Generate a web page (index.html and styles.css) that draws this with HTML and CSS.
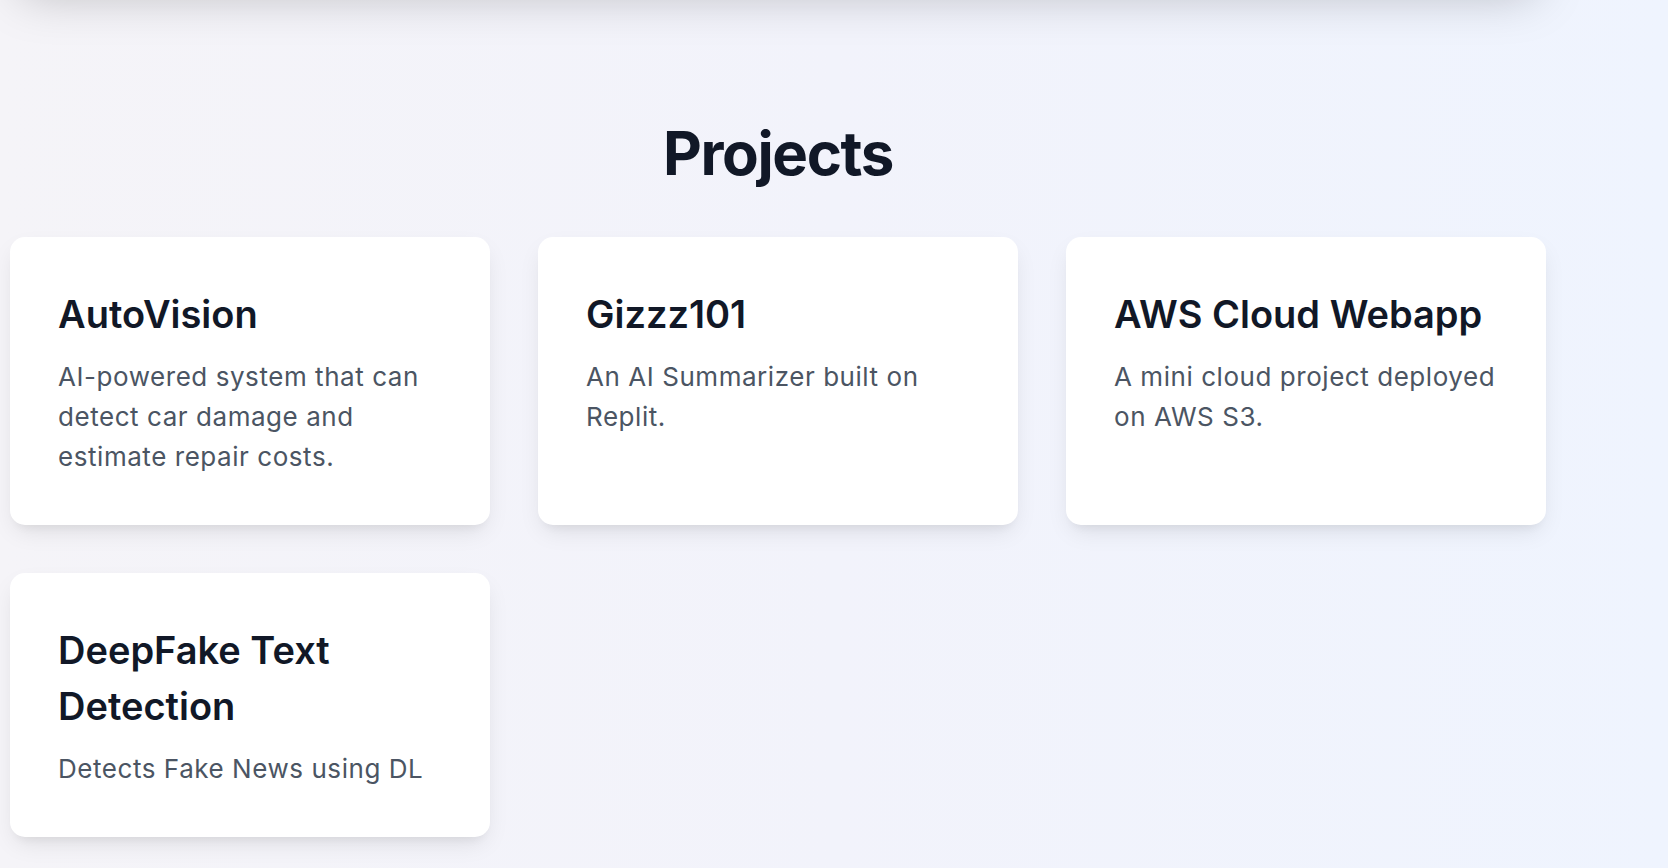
FILE: index.html
```html
<!DOCTYPE html>
<html lang="en">
<head>
<meta charset="utf-8">
<title>Projects</title>
<link rel="stylesheet" href="styles.css">
</head>
<body>
<div class="page">
  <div class="prev-section"></div>
  <section class="projects">
    <h2 class="projects-title">Projects</h2>
    <div class="grid">
      <div class="card">
        <h3 class="card-title">AutoVision</h3>
        <p class="card-desc">AI-powered system that can detect car damage and estimate repair costs.</p>
      </div>
      <div class="card">
        <h3 class="card-title">Gizzz101</h3>
        <p class="card-desc">An AI Summarizer built on Replit.</p>
      </div>
      <div class="card">
        <h3 class="card-title">AWS Cloud Webapp</h3>
        <p class="card-desc">A mini cloud project deployed on AWS S3.</p>
      </div>
      <div class="card">
        <h3 class="card-title">DeepFake Text Detection</h3>
        <p class="card-desc">Detects Fake News using DL</p>
      </div>
    </div>
  </section>
</div>
</body>
</html>
```

FILE: styles.css
```css
html, body {
  margin: 0;
  padding: 0;
}
body {
  font-family: Inter, "Noto Sans", "Liberation Sans", sans-serif;
  background: linear-gradient(to right, #f5f4f8 0%, #f2f3fb 50%, #eff4fe 100%);
  min-height: 100vh;
  overflow: hidden;
}
.page {
  display: flow-root;
  width: 1536px;
  margin-left: 10px;
}
.prev-section {
  height: 100px;
  margin-top: -120px;
  margin-bottom: 20px;
  border-radius: 15px;
  background: #f3f3f7;
  box-shadow: 0 25px 50px -12px rgba(0, 0, 0, 0.25);
}
.projects {
  padding-top: 123px;
}
.projects-title {
  margin: 0 0 54px;
  font-size: 60px;
  line-height: 60px;
  font-weight: 700;
  letter-spacing: -1.4px;
  color: #111827;
  text-align: center;
}
.grid {
  display: grid;
  grid-template-columns: repeat(3, 480px);
  gap: 48px;
}
.card {
  background: #ffffff;
  border-radius: 15px;
  padding: 49px 48px 48px;
  box-shadow: 0 10px 25px -5px rgba(0, 0, 0, 0.1), 0 8px 10px -6px rgba(0, 0, 0, 0.06);
}
.card-title {
  margin: 0 0 15px;
  font-size: 38px;
  line-height: 56px;
  font-weight: 600;
  color: #111827;
}
.card-desc {
  margin: 0;
  font-size: 26px;
  line-height: 40px;
  letter-spacing: 0.55px;
  color: #4b5563;
}
```
